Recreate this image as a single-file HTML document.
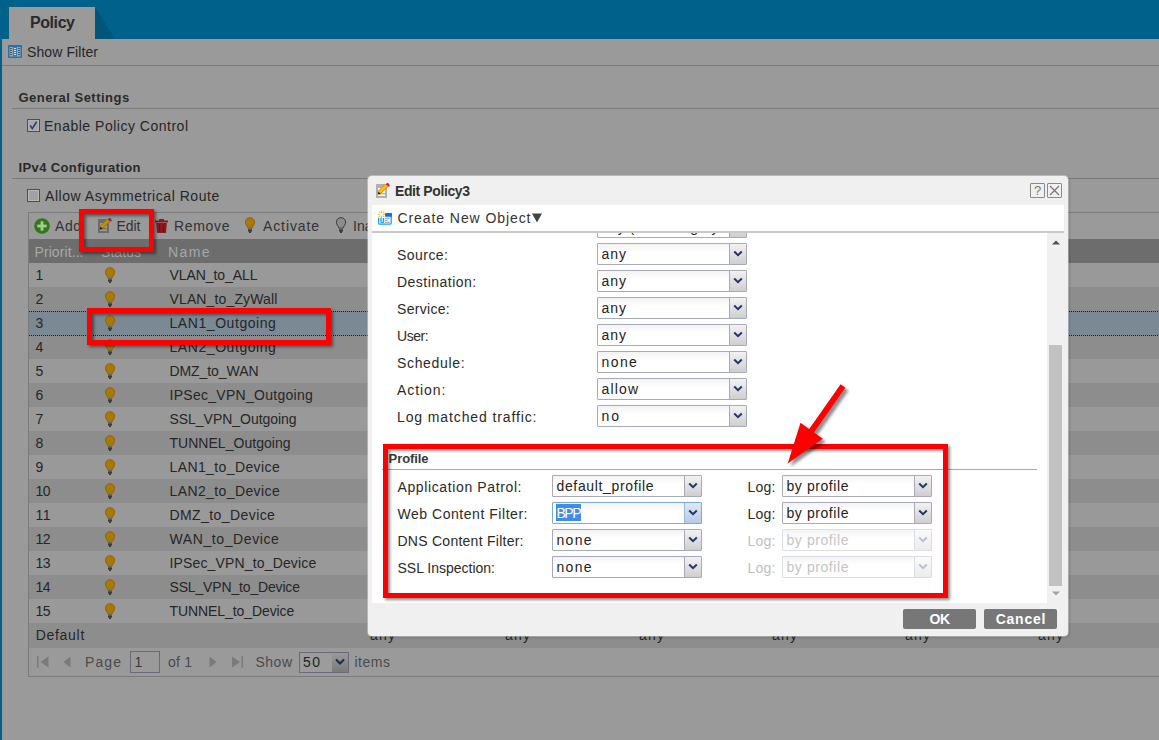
<!DOCTYPE html><html><head><meta charset="utf-8"><style>
html,body{margin:0;padding:0;width:1159px;height:740px;overflow:hidden;position:relative;font-family:"Liberation Sans",sans-serif;}
</style></head><body>
<div style="position:absolute;left:0px;top:0px;width:1159px;height:39px;background:#00628a"></div>
<div style="position:absolute;left:0px;top:39px;width:1159px;height:701px;background:#00628a"></div>
<div style="position:absolute;left:2px;top:39px;width:1157px;height:701px;background:#9a9a9a"></div>
<svg style="position:absolute;left:0;top:0" width="140" height="40"><polygon points="95,7 115,39 95,39" fill="#005579"/></svg>
<div style="position:absolute;left:9px;top:7px;width:86px;height:32px;background:#9a9a9a"></div>
<div style="position:absolute;left:30.00px;top:15.45px;font-size:16px;line-height:16px;font-weight:bold;color:#2a2a2a;letter-spacing:-0.427px;white-space:nowrap;">Policy</div>
<svg style="position:absolute;left:8px;top:45px" width="14" height="13" viewBox="0 0 14 13">
<rect x="0" y="0" width="14" height="13" rx="1" fill="#1f74b8"/>
<rect x="1.5" y="2" width="11" height="9.5" fill="#9fa7ad"/>
<rect x="5" y="2" width="4" height="9.5" fill="#2c7fc0"/>
<g fill="#555"><rect x="2" y="3" width="2" height="1"/><rect x="2" y="5" width="2" height="1"/><rect x="2" y="7" width="2" height="1"/><rect x="2" y="9" width="2" height="1"/>
<rect x="10" y="3" width="2" height="1"/><rect x="10" y="5" width="2" height="1"/><rect x="10" y="7" width="2" height="1"/><rect x="10" y="9" width="2" height="1"/></g>
<g fill="#cfe0ee"><rect x="6" y="3" width="2" height="1"/><rect x="6" y="5" width="2" height="1"/><rect x="6" y="7" width="2" height="1"/><rect x="6" y="9" width="2" height="1"/></g>
</svg>
<div style="position:absolute;left:27.00px;top:45.15px;font-size:14px;line-height:14px;color:#262626;letter-spacing:0.098px;white-space:nowrap;">Show Filter</div>
<div style="position:absolute;left:2px;top:65px;width:1157px;height:1px;background:#7b7b7b"></div>
<div style="position:absolute;left:18.50px;top:90.99px;font-size:13px;line-height:13px;font-weight:bold;color:#2a2a2a;letter-spacing:0.493px;white-space:nowrap;">General Settings</div>
<div style="position:absolute;left:12px;top:108px;width:1147px;height:1px;background:#7b7b7b"></div>
<svg style="position:absolute;left:27px;top:119px" width="13" height="13" viewBox="0 0 13 13">
<rect x="0.5" y="0.5" width="12" height="12" fill="#a9a9a9" stroke="#4e4e4e"/>
<rect x="1.5" y="1.5" width="10" height="10" fill="none" stroke="#b2b2b2"/>
<path d="M3.2 6.5 L5.3 9.6 L9.6 2.8" fill="none" stroke="#2b3f78" stroke-width="1.6"/>
</svg>
<div style="position:absolute;left:44.00px;top:119.15px;font-size:14px;line-height:14px;color:#262626;letter-spacing:0.508px;white-space:nowrap;">Enable Policy Control</div>
<div style="position:absolute;left:18.50px;top:160.99px;font-size:13px;line-height:13px;font-weight:bold;color:#2a2a2a;letter-spacing:0.379px;white-space:nowrap;">IPv4 Configuration</div>
<div style="position:absolute;left:12px;top:178px;width:1147px;height:1px;background:#7b7b7b"></div>
<svg style="position:absolute;left:27px;top:189px" width="13" height="13" viewBox="0 0 13 13">
<rect x="0.5" y="0.5" width="12" height="12" fill="#a2a2a2" stroke="#4e4e4e"/>
<rect x="1.5" y="1.5" width="10" height="10" fill="none" stroke="#b9b9b9"/>
</svg>
<div style="position:absolute;left:45.00px;top:189.15px;font-size:14px;line-height:14px;color:#262626;letter-spacing:0.539px;white-space:nowrap;">Allow Asymmetrical Route</div>
<div style="position:absolute;left:28px;top:212px;width:1172px;height:465px;border:1px solid #7b7b7b;box-sizing:border-box;background:#9a9a9a"></div>
<svg style="position:absolute;left:34px;top:218px" width="16" height="16" viewBox="0 0 16 16">
<circle cx="8" cy="8" r="7.8" fill="#2f7a16"/><rect x="6.6" y="3.3" width="2.8" height="9.4" fill="#a8c89c"/><rect x="3.3" y="6.6" width="9.4" height="2.8" fill="#a8c89c"/></svg>
<div style="position:absolute;left:55.00px;top:219.15px;font-size:14px;line-height:14px;color:#333;letter-spacing:0.545px;white-space:nowrap;">Add</div>
<svg style="position:absolute;left:98px;top:217px" width="15" height="17" viewBox="0 0 15 17"><rect x="0" y="2" width="11" height="14" fill="#6c6c6c"/><rect x="2" y="6" width="7" height="5" fill="#9a9a9a"/><rect x="2" y="12.3" width="7" height="1.7" fill="#9a9a9a"/>
<path d="M2.6 11.2 L10.6 3.2" stroke="#a86a08" stroke-width="4.2"/><path d="M2.9 10.9 L10.6 3.2" stroke="#c09010" stroke-width="2.6"/>
<path d="M1.8 12.6 L2.6 9.8 L4.6 11.8Z" fill="#111"/><circle cx="11.6" cy="2.2" r="1.3" fill="#8a2040"/><circle cx="12.6" cy="3.4" r="1.1" fill="#8a2040"/></svg>
<div style="position:absolute;left:116.50px;top:219.15px;font-size:14px;line-height:14px;color:#333;letter-spacing:-0.041px;white-space:nowrap;">Edit</div>
<svg style="position:absolute;left:155px;top:219px" width="13" height="14" viewBox="0 0 13 14">
<rect x="0" y="1.5" width="13" height="2" fill="#8a1a1f"/><rect x="4" y="0" width="5" height="2" fill="#8a1a1f"/>
<path d="M1.2 4 L11.8 4 L11 14 L2 14Z" fill="#8a1a1f"/><rect x="4" y="5" width="1" height="8" fill="#6b1015"/><rect x="8" y="5" width="1" height="8" fill="#6b1015"/></svg>
<div style="position:absolute;left:174.00px;top:219.15px;font-size:14px;line-height:14px;color:#333;letter-spacing:0.674px;white-space:nowrap;">Remove</div>
<svg style="position:absolute;left:245px;top:217px" width="11" height="17" viewBox="0 0 11 17">
<path d="M5 0.7 C7.9 0.7 9.6 2.7 9.6 5.2 C9.6 7.6 7.8 8.8 7 11.2 L3 11.2 C2.2 8.8 0.4 7.6 0.4 5.2 C0.4 2.7 2.1 0.7 5 0.7Z" fill="#a47b00" stroke="#a45c06" stroke-width="1"/>
<rect x="3" y="11.2" width="4" height="1.2" fill="#56687a"/><path d="M3 12.4 L7 12.4 L7 14.6 L3 14.6Z" fill="#3a3a3a"/><rect x="4" y="14.6" width="2" height="1.2" fill="#1e1e1e"/></svg>
<div style="position:absolute;left:263.00px;top:219.15px;font-size:14px;line-height:14px;color:#333;letter-spacing:0.886px;white-space:nowrap;">Activate</div>
<svg style="position:absolute;left:336px;top:217px" width="11" height="17" viewBox="0 0 11 17">
<path d="M5 0.7 C7.9 0.7 9.6 2.7 9.6 5.2 C9.6 7.6 7.8 8.8 7 11.2 L3 11.2 C2.2 8.8 0.4 7.6 0.4 5.2 C0.4 2.7 2.1 0.7 5 0.7Z" fill="#8c8c8c" stroke="#3a3a3a" stroke-width="1"/>
<rect x="3" y="11.2" width="4" height="1.2" fill="#56687a"/><path d="M3 12.4 L7 12.4 L7 14.6 L3 14.6Z" fill="#3a3a3a"/><rect x="4" y="14.6" width="2" height="1.2" fill="#1e1e1e"/></svg>
<div style="position:absolute;left:353.00px;top:219.15px;font-size:14px;line-height:14px;color:#333;letter-spacing:0.000px;white-space:nowrap;">Inactivate</div>
<div style="position:absolute;left:29px;top:239px;width:1130px;height:24px;background:#6d6d6d"></div>
<div style="position:absolute;left:34.50px;top:245.15px;font-size:14px;line-height:14px;color:#a8a8a8;letter-spacing:0.086px;white-space:nowrap;">Priorit...</div>
<div style="position:absolute;left:85px;top:251px;width:5px;height:1px;background:#a0a0a0"></div>
<div style="position:absolute;left:101.00px;top:245.15px;font-size:14px;line-height:14px;color:#a8a8a8;letter-spacing:0.062px;white-space:nowrap;">Status</div>
<div style="position:absolute;left:168.00px;top:245.15px;font-size:14px;line-height:14px;color:#a8a8a8;letter-spacing:1.385px;white-space:nowrap;">Name</div>
<div style="position:absolute;left:29px;top:263px;width:1130px;height:24px;background:#999999"></div>
<div style="position:absolute;left:35.50px;top:268.15px;font-size:14px;line-height:14px;color:#262626;letter-spacing:0.000px;white-space:nowrap;">1</div>
<svg style="position:absolute;left:105px;top:266.5px" width="11" height="17" viewBox="0 0 11 17">
<path d="M5 0.7 C7.9 0.7 9.6 2.7 9.6 5.2 C9.6 7.6 7.8 8.8 7 11.2 L3 11.2 C2.2 8.8 0.4 7.6 0.4 5.2 C0.4 2.7 2.1 0.7 5 0.7Z" fill="#a47b00" stroke="#a45c06" stroke-width="1"/>
<rect x="3" y="11.2" width="4" height="1.2" fill="#56687a"/><path d="M3 12.4 L7 12.4 L7 14.6 L3 14.6Z" fill="#3a3a3a"/><rect x="4" y="14.6" width="2" height="1.2" fill="#1e1e1e"/></svg>
<div style="position:absolute;left:169.50px;top:268.15px;font-size:14px;line-height:14px;color:#262626;letter-spacing:-0.073px;white-space:nowrap;">VLAN_to_ALL</div>
<div style="position:absolute;left:29px;top:287px;width:1130px;height:24px;background:#8d8d8d"></div>
<div style="position:absolute;left:35.50px;top:292.15px;font-size:14px;line-height:14px;color:#262626;letter-spacing:0.000px;white-space:nowrap;">2</div>
<svg style="position:absolute;left:105px;top:290.5px" width="11" height="17" viewBox="0 0 11 17">
<path d="M5 0.7 C7.9 0.7 9.6 2.7 9.6 5.2 C9.6 7.6 7.8 8.8 7 11.2 L3 11.2 C2.2 8.8 0.4 7.6 0.4 5.2 C0.4 2.7 2.1 0.7 5 0.7Z" fill="#a47b00" stroke="#a45c06" stroke-width="1"/>
<rect x="3" y="11.2" width="4" height="1.2" fill="#56687a"/><path d="M3 12.4 L7 12.4 L7 14.6 L3 14.6Z" fill="#3a3a3a"/><rect x="4" y="14.6" width="2" height="1.2" fill="#1e1e1e"/></svg>
<div style="position:absolute;left:169.50px;top:292.15px;font-size:14px;line-height:14px;color:#262626;letter-spacing:0.133px;white-space:nowrap;">VLAN_to_ZyWall</div>
<div style="position:absolute;left:29px;top:311px;width:1130px;height:24px;background:#7b8994"></div>
<div style="position:absolute;left:35.50px;top:316.15px;font-size:14px;line-height:14px;color:#262626;letter-spacing:0.000px;white-space:nowrap;">3</div>
<svg style="position:absolute;left:105px;top:314.5px" width="11" height="17" viewBox="0 0 11 17">
<path d="M5 0.7 C7.9 0.7 9.6 2.7 9.6 5.2 C9.6 7.6 7.8 8.8 7 11.2 L3 11.2 C2.2 8.8 0.4 7.6 0.4 5.2 C0.4 2.7 2.1 0.7 5 0.7Z" fill="#a47b00" stroke="#a45c06" stroke-width="1"/>
<rect x="3" y="11.2" width="4" height="1.2" fill="#56687a"/><path d="M3 12.4 L7 12.4 L7 14.6 L3 14.6Z" fill="#3a3a3a"/><rect x="4" y="14.6" width="2" height="1.2" fill="#1e1e1e"/></svg>
<div style="position:absolute;left:169.50px;top:316.15px;font-size:14px;line-height:14px;color:#262626;letter-spacing:0.564px;white-space:nowrap;">LAN1_Outgoing</div>
<div style="position:absolute;left:29px;top:335px;width:1130px;height:24px;background:#8d8d8d"></div>
<div style="position:absolute;left:35.50px;top:340.15px;font-size:14px;line-height:14px;color:#262626;letter-spacing:0.000px;white-space:nowrap;">4</div>
<svg style="position:absolute;left:105px;top:338.5px" width="11" height="17" viewBox="0 0 11 17">
<path d="M5 0.7 C7.9 0.7 9.6 2.7 9.6 5.2 C9.6 7.6 7.8 8.8 7 11.2 L3 11.2 C2.2 8.8 0.4 7.6 0.4 5.2 C0.4 2.7 2.1 0.7 5 0.7Z" fill="#a47b00" stroke="#a45c06" stroke-width="1"/>
<rect x="3" y="11.2" width="4" height="1.2" fill="#56687a"/><path d="M3 12.4 L7 12.4 L7 14.6 L3 14.6Z" fill="#3a3a3a"/><rect x="4" y="14.6" width="2" height="1.2" fill="#1e1e1e"/></svg>
<div style="position:absolute;left:169.50px;top:340.15px;font-size:14px;line-height:14px;color:#262626;letter-spacing:0.564px;white-space:nowrap;">LAN2_Outgoing</div>
<div style="position:absolute;left:29px;top:359px;width:1130px;height:24px;background:#999999"></div>
<div style="position:absolute;left:35.50px;top:364.15px;font-size:14px;line-height:14px;color:#262626;letter-spacing:0.000px;white-space:nowrap;">5</div>
<svg style="position:absolute;left:105px;top:362.5px" width="11" height="17" viewBox="0 0 11 17">
<path d="M5 0.7 C7.9 0.7 9.6 2.7 9.6 5.2 C9.6 7.6 7.8 8.8 7 11.2 L3 11.2 C2.2 8.8 0.4 7.6 0.4 5.2 C0.4 2.7 2.1 0.7 5 0.7Z" fill="#a47b00" stroke="#a45c06" stroke-width="1"/>
<rect x="3" y="11.2" width="4" height="1.2" fill="#56687a"/><path d="M3 12.4 L7 12.4 L7 14.6 L3 14.6Z" fill="#3a3a3a"/><rect x="4" y="14.6" width="2" height="1.2" fill="#1e1e1e"/></svg>
<div style="position:absolute;left:169.50px;top:364.15px;font-size:14px;line-height:14px;color:#262626;letter-spacing:-0.079px;white-space:nowrap;">DMZ_to_WAN</div>
<div style="position:absolute;left:29px;top:383px;width:1130px;height:24px;background:#8d8d8d"></div>
<div style="position:absolute;left:35.50px;top:388.15px;font-size:14px;line-height:14px;color:#262626;letter-spacing:0.000px;white-space:nowrap;">6</div>
<svg style="position:absolute;left:105px;top:386.5px" width="11" height="17" viewBox="0 0 11 17">
<path d="M5 0.7 C7.9 0.7 9.6 2.7 9.6 5.2 C9.6 7.6 7.8 8.8 7 11.2 L3 11.2 C2.2 8.8 0.4 7.6 0.4 5.2 C0.4 2.7 2.1 0.7 5 0.7Z" fill="#a47b00" stroke="#a45c06" stroke-width="1"/>
<rect x="3" y="11.2" width="4" height="1.2" fill="#56687a"/><path d="M3 12.4 L7 12.4 L7 14.6 L3 14.6Z" fill="#3a3a3a"/><rect x="4" y="14.6" width="2" height="1.2" fill="#1e1e1e"/></svg>
<div style="position:absolute;left:169.50px;top:388.15px;font-size:14px;line-height:14px;color:#262626;letter-spacing:0.281px;white-space:nowrap;">IPSec_VPN_Outgoing</div>
<div style="position:absolute;left:29px;top:407px;width:1130px;height:24px;background:#999999"></div>
<div style="position:absolute;left:35.50px;top:412.15px;font-size:14px;line-height:14px;color:#262626;letter-spacing:0.000px;white-space:nowrap;">7</div>
<svg style="position:absolute;left:105px;top:410.5px" width="11" height="17" viewBox="0 0 11 17">
<path d="M5 0.7 C7.9 0.7 9.6 2.7 9.6 5.2 C9.6 7.6 7.8 8.8 7 11.2 L3 11.2 C2.2 8.8 0.4 7.6 0.4 5.2 C0.4 2.7 2.1 0.7 5 0.7Z" fill="#a47b00" stroke="#a45c06" stroke-width="1"/>
<rect x="3" y="11.2" width="4" height="1.2" fill="#56687a"/><path d="M3 12.4 L7 12.4 L7 14.6 L3 14.6Z" fill="#3a3a3a"/><rect x="4" y="14.6" width="2" height="1.2" fill="#1e1e1e"/></svg>
<div style="position:absolute;left:169.50px;top:412.15px;font-size:14px;line-height:14px;color:#262626;letter-spacing:-0.036px;white-space:nowrap;">SSL_VPN_Outgoing</div>
<div style="position:absolute;left:29px;top:431px;width:1130px;height:24px;background:#8d8d8d"></div>
<div style="position:absolute;left:35.50px;top:436.15px;font-size:14px;line-height:14px;color:#262626;letter-spacing:0.000px;white-space:nowrap;">8</div>
<svg style="position:absolute;left:105px;top:434.5px" width="11" height="17" viewBox="0 0 11 17">
<path d="M5 0.7 C7.9 0.7 9.6 2.7 9.6 5.2 C9.6 7.6 7.8 8.8 7 11.2 L3 11.2 C2.2 8.8 0.4 7.6 0.4 5.2 C0.4 2.7 2.1 0.7 5 0.7Z" fill="#a47b00" stroke="#a45c06" stroke-width="1"/>
<rect x="3" y="11.2" width="4" height="1.2" fill="#56687a"/><path d="M3 12.4 L7 12.4 L7 14.6 L3 14.6Z" fill="#3a3a3a"/><rect x="4" y="14.6" width="2" height="1.2" fill="#1e1e1e"/></svg>
<div style="position:absolute;left:169.50px;top:436.15px;font-size:14px;line-height:14px;color:#262626;letter-spacing:0.028px;white-space:nowrap;">TUNNEL_Outgoing</div>
<div style="position:absolute;left:29px;top:455px;width:1130px;height:24px;background:#999999"></div>
<div style="position:absolute;left:35.50px;top:460.15px;font-size:14px;line-height:14px;color:#262626;letter-spacing:0.000px;white-space:nowrap;">9</div>
<svg style="position:absolute;left:105px;top:458.5px" width="11" height="17" viewBox="0 0 11 17">
<path d="M5 0.7 C7.9 0.7 9.6 2.7 9.6 5.2 C9.6 7.6 7.8 8.8 7 11.2 L3 11.2 C2.2 8.8 0.4 7.6 0.4 5.2 C0.4 2.7 2.1 0.7 5 0.7Z" fill="#a47b00" stroke="#a45c06" stroke-width="1"/>
<rect x="3" y="11.2" width="4" height="1.2" fill="#56687a"/><path d="M3 12.4 L7 12.4 L7 14.6 L3 14.6Z" fill="#3a3a3a"/><rect x="4" y="14.6" width="2" height="1.2" fill="#1e1e1e"/></svg>
<div style="position:absolute;left:169.50px;top:460.15px;font-size:14px;line-height:14px;color:#262626;letter-spacing:0.395px;white-space:nowrap;">LAN1_to_Device</div>
<div style="position:absolute;left:29px;top:479px;width:1130px;height:24px;background:#8d8d8d"></div>
<div style="position:absolute;left:35.50px;top:484.15px;font-size:14px;line-height:14px;color:#262626;letter-spacing:-0.572px;white-space:nowrap;">10</div>
<svg style="position:absolute;left:105px;top:482.5px" width="11" height="17" viewBox="0 0 11 17">
<path d="M5 0.7 C7.9 0.7 9.6 2.7 9.6 5.2 C9.6 7.6 7.8 8.8 7 11.2 L3 11.2 C2.2 8.8 0.4 7.6 0.4 5.2 C0.4 2.7 2.1 0.7 5 0.7Z" fill="#a47b00" stroke="#a45c06" stroke-width="1"/>
<rect x="3" y="11.2" width="4" height="1.2" fill="#56687a"/><path d="M3 12.4 L7 12.4 L7 14.6 L3 14.6Z" fill="#3a3a3a"/><rect x="4" y="14.6" width="2" height="1.2" fill="#1e1e1e"/></svg>
<div style="position:absolute;left:169.50px;top:484.15px;font-size:14px;line-height:14px;color:#262626;letter-spacing:0.395px;white-space:nowrap;">LAN2_to_Device</div>
<div style="position:absolute;left:29px;top:503px;width:1130px;height:24px;background:#999999"></div>
<div style="position:absolute;left:35.50px;top:508.15px;font-size:14px;line-height:14px;color:#262626;letter-spacing:0.467px;white-space:nowrap;">11</div>
<svg style="position:absolute;left:105px;top:506.5px" width="11" height="17" viewBox="0 0 11 17">
<path d="M5 0.7 C7.9 0.7 9.6 2.7 9.6 5.2 C9.6 7.6 7.8 8.8 7 11.2 L3 11.2 C2.2 8.8 0.4 7.6 0.4 5.2 C0.4 2.7 2.1 0.7 5 0.7Z" fill="#a47b00" stroke="#a45c06" stroke-width="1"/>
<rect x="3" y="11.2" width="4" height="1.2" fill="#56687a"/><path d="M3 12.4 L7 12.4 L7 14.6 L3 14.6Z" fill="#3a3a3a"/><rect x="4" y="14.6" width="2" height="1.2" fill="#1e1e1e"/></svg>
<div style="position:absolute;left:169.50px;top:508.15px;font-size:14px;line-height:14px;color:#262626;letter-spacing:0.420px;white-space:nowrap;">DMZ_to_Device</div>
<div style="position:absolute;left:29px;top:527px;width:1130px;height:24px;background:#8d8d8d"></div>
<div style="position:absolute;left:35.50px;top:532.15px;font-size:14px;line-height:14px;color:#262626;letter-spacing:-0.572px;white-space:nowrap;">12</div>
<svg style="position:absolute;left:105px;top:530.5px" width="11" height="17" viewBox="0 0 11 17">
<path d="M5 0.7 C7.9 0.7 9.6 2.7 9.6 5.2 C9.6 7.6 7.8 8.8 7 11.2 L3 11.2 C2.2 8.8 0.4 7.6 0.4 5.2 C0.4 2.7 2.1 0.7 5 0.7Z" fill="#a47b00" stroke="#a45c06" stroke-width="1"/>
<rect x="3" y="11.2" width="4" height="1.2" fill="#56687a"/><path d="M3 12.4 L7 12.4 L7 14.6 L3 14.6Z" fill="#3a3a3a"/><rect x="4" y="14.6" width="2" height="1.2" fill="#1e1e1e"/></svg>
<div style="position:absolute;left:169.50px;top:532.15px;font-size:14px;line-height:14px;color:#262626;letter-spacing:0.601px;white-space:nowrap;">WAN_to_Device</div>
<div style="position:absolute;left:29px;top:551px;width:1130px;height:24px;background:#999999"></div>
<div style="position:absolute;left:35.50px;top:556.15px;font-size:14px;line-height:14px;color:#262626;letter-spacing:-0.572px;white-space:nowrap;">13</div>
<svg style="position:absolute;left:105px;top:554.5px" width="11" height="17" viewBox="0 0 11 17">
<path d="M5 0.7 C7.9 0.7 9.6 2.7 9.6 5.2 C9.6 7.6 7.8 8.8 7 11.2 L3 11.2 C2.2 8.8 0.4 7.6 0.4 5.2 C0.4 2.7 2.1 0.7 5 0.7Z" fill="#a47b00" stroke="#a45c06" stroke-width="1"/>
<rect x="3" y="11.2" width="4" height="1.2" fill="#56687a"/><path d="M3 12.4 L7 12.4 L7 14.6 L3 14.6Z" fill="#3a3a3a"/><rect x="4" y="14.6" width="2" height="1.2" fill="#1e1e1e"/></svg>
<div style="position:absolute;left:169.50px;top:556.15px;font-size:14px;line-height:14px;color:#262626;letter-spacing:0.152px;white-space:nowrap;">IPSec_VPN_to_Device</div>
<div style="position:absolute;left:29px;top:575px;width:1130px;height:24px;background:#8d8d8d"></div>
<div style="position:absolute;left:35.50px;top:580.15px;font-size:14px;line-height:14px;color:#262626;letter-spacing:-0.572px;white-space:nowrap;">14</div>
<svg style="position:absolute;left:105px;top:578.5px" width="11" height="17" viewBox="0 0 11 17">
<path d="M5 0.7 C7.9 0.7 9.6 2.7 9.6 5.2 C9.6 7.6 7.8 8.8 7 11.2 L3 11.2 C2.2 8.8 0.4 7.6 0.4 5.2 C0.4 2.7 2.1 0.7 5 0.7Z" fill="#a47b00" stroke="#a45c06" stroke-width="1"/>
<rect x="3" y="11.2" width="4" height="1.2" fill="#56687a"/><path d="M3 12.4 L7 12.4 L7 14.6 L3 14.6Z" fill="#3a3a3a"/><rect x="4" y="14.6" width="2" height="1.2" fill="#1e1e1e"/></svg>
<div style="position:absolute;left:169.50px;top:580.15px;font-size:14px;line-height:14px;color:#262626;letter-spacing:-0.161px;white-space:nowrap;">SSL_VPN_to_Device</div>
<div style="position:absolute;left:29px;top:599px;width:1130px;height:24px;background:#999999"></div>
<div style="position:absolute;left:35.50px;top:604.15px;font-size:14px;line-height:14px;color:#262626;letter-spacing:-0.572px;white-space:nowrap;">15</div>
<svg style="position:absolute;left:105px;top:602.5px" width="11" height="17" viewBox="0 0 11 17">
<path d="M5 0.7 C7.9 0.7 9.6 2.7 9.6 5.2 C9.6 7.6 7.8 8.8 7 11.2 L3 11.2 C2.2 8.8 0.4 7.6 0.4 5.2 C0.4 2.7 2.1 0.7 5 0.7Z" fill="#a47b00" stroke="#a45c06" stroke-width="1"/>
<rect x="3" y="11.2" width="4" height="1.2" fill="#56687a"/><path d="M3 12.4 L7 12.4 L7 14.6 L3 14.6Z" fill="#3a3a3a"/><rect x="4" y="14.6" width="2" height="1.2" fill="#1e1e1e"/></svg>
<div style="position:absolute;left:169.50px;top:604.15px;font-size:14px;line-height:14px;color:#262626;letter-spacing:-0.083px;white-space:nowrap;">TUNNEL_to_Device</div>
<svg style="position:absolute;left:29px;top:311px" width="1130" height="25"><line x1="0" y1="0.5" x2="1130" y2="0.5" stroke="#1a1a1a" stroke-dasharray="1 1"/><line x1="0" y1="24.5" x2="1130" y2="24.5" stroke="#1a1a1a" stroke-dasharray="1 1"/></svg>
<div style="position:absolute;left:29px;top:623px;width:1130px;height:25px;background:#8d8d8d"></div>
<div style="position:absolute;left:35.70px;top:628.15px;font-size:14px;line-height:14px;color:#262626;letter-spacing:0.707px;white-space:nowrap;">Default</div>
<div style="position:absolute;left:370.00px;top:628.15px;font-size:14px;line-height:14px;color:#262626;letter-spacing:1.214px;white-space:nowrap;">any</div>
<div style="position:absolute;left:505.00px;top:628.15px;font-size:14px;line-height:14px;color:#262626;letter-spacing:1.214px;white-space:nowrap;">any</div>
<div style="position:absolute;left:639.00px;top:628.15px;font-size:14px;line-height:14px;color:#262626;letter-spacing:1.214px;white-space:nowrap;">any</div>
<div style="position:absolute;left:772.00px;top:628.15px;font-size:14px;line-height:14px;color:#262626;letter-spacing:1.214px;white-space:nowrap;">any</div>
<div style="position:absolute;left:905.00px;top:628.15px;font-size:14px;line-height:14px;color:#262626;letter-spacing:1.214px;white-space:nowrap;">any</div>
<div style="position:absolute;left:1038.00px;top:628.15px;font-size:14px;line-height:14px;color:#262626;letter-spacing:1.214px;white-space:nowrap;">any</div>
<div style="position:absolute;left:29px;top:676px;width:1130px;height:1px;background:#7b7b7b"></div>
<svg style="position:absolute;left:37px;top:655px" width="210" height="14" viewBox="0 0 210 14">
<rect x="0" y="1" width="1.5" height="12" fill="#7a7a7a"/><path d="M11.5 1.5 L3.5 7 L11.5 12.5Z" fill="#7a7a7a"/>
<path d="M33.5 1.5 L26.5 7 L33.5 12.5Z" fill="#7a7a7a"/>
<path d="M172.5 1.5 L179.5 7 L172.5 12.5Z" fill="#7a7a7a"/>
<path d="M195 1.5 L203 7 L195 12.5Z" fill="#7a7a7a"/><rect x="204.5" y="1" width="1.5" height="12" fill="#7a7a7a"/>
</svg>
<div style="position:absolute;left:85.00px;top:655.15px;font-size:14px;line-height:14px;color:#4a4a4a;letter-spacing:1.101px;white-space:nowrap;">Page</div>
<div style="position:absolute;left:130px;top:651px;width:30px;height:22px;border:1px solid #6a6a7c;box-sizing:border-box;background:#9a9a9a"></div>
<div style="position:absolute;left:134.50px;top:655.15px;font-size:14px;line-height:14px;color:#3a3a3a;letter-spacing:0.000px;white-space:nowrap;">1</div>
<div style="position:absolute;left:168.00px;top:655.15px;font-size:14px;line-height:14px;color:#4a4a4a;letter-spacing:0.216px;white-space:nowrap;">of 1</div>
<div style="position:absolute;left:255.50px;top:655.15px;font-size:14px;line-height:14px;color:#4a4a4a;letter-spacing:0.493px;white-space:nowrap;">Show</div>
<div style="position:absolute;left:299px;top:652px;width:50px;height:21px;border:1px solid #6a6a7c;box-sizing:border-box;background:#9c9c9c"></div>
<div style="position:absolute;left:332px;top:653px;width:16px;height:19px;background:linear-gradient(#999,#7a7a7a)"></div>
<svg style="position:absolute;left:335px;top:658px" width="10" height="8" viewBox="0 0 10 8"><path d="M1 1.5 L5 5.5 L9 1.5" fill="none" stroke="#1c2a4a" stroke-width="2"/></svg>
<div style="position:absolute;left:303.00px;top:655.15px;font-size:14px;line-height:14px;color:#222;letter-spacing:1.428px;white-space:nowrap;">50</div>
<div style="position:absolute;left:354.50px;top:655.15px;font-size:14px;line-height:14px;color:#4a4a4a;letter-spacing:0.513px;white-space:nowrap;">items</div>
<div style="position:absolute;left:79px;top:209px;width:75px;height:43px;border:5px solid #ff0000;box-sizing:border-box;filter:drop-shadow(2px 2px 1.5px rgba(0,0,0,0.45))"></div>
<div style="position:absolute;left:87px;top:308px;width:244px;height:37px;border:5px solid #ff0000;box-sizing:border-box;filter:drop-shadow(2px 2px 1.5px rgba(0,0,0,0.45))"></div>
<div style="position:absolute;left:368px;top:176px;width:700px;height:460px;background:#f0f0f0;border-radius:4px;box-shadow:0 0 0 1px rgba(255,255,255,0.35), 1px 1px 3px rgba(0,0,0,0.25)"></div>
<svg style="position:absolute;left:376px;top:182px" width="15" height="17" viewBox="0 0 15 17"><rect x="0" y="2" width="11" height="14" fill="#b0b0b0"/><rect x="2" y="6" width="7" height="5" fill="#fafafa"/><rect x="2" y="12.3" width="7" height="1.7" fill="#fafafa"/>
<path d="M2.6 11.2 L10.6 3.2" stroke="#f08c00" stroke-width="4.2"/><path d="M2.9 10.9 L10.6 3.2" stroke="#ffc000" stroke-width="2.6"/>
<path d="M1.8 12.6 L2.6 9.8 L4.6 11.8Z" fill="#111"/><circle cx="11.6" cy="2.2" r="1.3" fill="#d0104a"/><circle cx="12.6" cy="3.4" r="1.1" fill="#d0104a"/></svg>
<div style="position:absolute;left:395.00px;top:184.15px;font-size:14px;line-height:14px;font-weight:bold;color:#333;letter-spacing:-0.396px;white-space:nowrap;">Edit Policy3</div>
<div style="position:absolute;left:1030px;top:183px;width:15px;height:15px;border:1px solid #8a8a8a;box-sizing:border-box;border-radius:1px"></div>
<div style="position:absolute;left:1034.00px;top:183.99px;font-size:13px;line-height:13px;color:#777;letter-spacing:0.000px;white-space:nowrap;">?</div>
<div style="position:absolute;left:1047px;top:183px;width:15px;height:15px;border:1px solid #8a8a8a;box-sizing:border-box;border-radius:1px"></div>
<svg style="position:absolute;left:1047px;top:183px" width="15" height="15" viewBox="0 0 15 15"><path d="M3 3 L12 12 M12 3 L3 12" stroke="#777" stroke-width="1.2"/></svg>
<div style="position:absolute;left:372px;top:205px;width:692px;height:26px;background:#fff"></div>
<div style="position:absolute;left:372px;top:231px;width:692px;height:2px;background:#c9c9c9"></div>
<svg style="position:absolute;left:374px;top:207px" width="22" height="22" viewBox="0 0 22 22">
<path d="M4.6 10.8 V16 Q4.6 17.2 5.8 17.2 H16 Q17.2 17.2 17.2 16 V9" fill="none" stroke="#12a6fa" stroke-width="1.3"/>
<rect x="11" y="6" width="7" height="3.8" rx="0.5" fill="#0a6ef2"/>
<rect x="11" y="10.8" width="4.8" height="0.9" fill="#8a8a8a"/><rect x="11" y="12.8" width="2.8" height="0.9" fill="#8a8a8a"/><rect x="11" y="14.8" width="4.8" height="0.9" fill="#8a8a8a"/>
<path d="M6.9 11 V14.4 Q6.9 15.8 8.3 15.8 Q9.6 15.8 9.6 14.4 V11" fill="#bfe3fb" stroke="#12a0f8" stroke-width="1.2"/>
<g stroke="#f8c200" stroke-width="1.1" stroke-linecap="round">
<path d="M7.5 4 V5.2 M7.5 9.2 V10.4 M4.2 7.2 H5.4 M9.6 7.2 H10.8 M5.2 4.9 L5.9 5.6 M9.1 8.8 L9.8 9.5 M9.8 4.9 L9.1 5.6 M5.9 8.8 L5.2 9.5"/></g>
</svg>
<div style="position:absolute;left:397.50px;top:211.15px;font-size:14px;line-height:14px;color:#333;letter-spacing:0.921px;white-space:nowrap;">Create New Object</div>
<svg style="position:absolute;left:531px;top:213px" width="12" height="10" viewBox="0 0 12 10"><path d="M1 0.5 L11 0.5 L6 9.5Z" fill="#444"/></svg>
<div style="position:absolute;left:372px;top:233px;width:675px;height:370px;background:#fff;overflow:hidden">
<div style="position:absolute;left:225px;top:-17px;width:150px;height:22px;border:1px solid #a9a9bd;box-sizing:border-box;background:linear-gradient(#f3f3f3,#fff 40%);border-radius:1px"></div><div style="position:absolute;left:357px;top:-16px;width:17px;height:20px;background:linear-gradient(#f2f2f2,#cfcfcf);border-left:1px solid #a9a9bd;box-sizing:border-box"></div><svg style="position:absolute;left:361px;top:-10px" width="10" height="8" viewBox="0 0 10 8"><path d="M1.2 1.5 L5 5.2 L8.8 1.5" fill="none" stroke="#22366e" stroke-width="2"/></svg>
<div style="position:absolute;left:225px;top:10px;width:150px;height:22px;border:1px solid #a9a9bd;box-sizing:border-box;background:linear-gradient(#f3f3f3,#fff 40%);border-radius:1px"></div><div style="position:absolute;left:357px;top:11px;width:17px;height:20px;background:linear-gradient(#f2f2f2,#cfcfcf);border-left:1px solid #a9a9bd;box-sizing:border-box"></div><svg style="position:absolute;left:361px;top:17px" width="10" height="8" viewBox="0 0 10 8"><path d="M1.2 1.5 L5 5.2 L8.8 1.5" fill="none" stroke="#22366e" stroke-width="2"/></svg>
<div style="position:absolute;left:225px;top:37px;width:150px;height:22px;border:1px solid #a9a9bd;box-sizing:border-box;background:linear-gradient(#f3f3f3,#fff 40%);border-radius:1px"></div><div style="position:absolute;left:357px;top:38px;width:17px;height:20px;background:linear-gradient(#f2f2f2,#cfcfcf);border-left:1px solid #a9a9bd;box-sizing:border-box"></div><svg style="position:absolute;left:361px;top:44px" width="10" height="8" viewBox="0 0 10 8"><path d="M1.2 1.5 L5 5.2 L8.8 1.5" fill="none" stroke="#22366e" stroke-width="2"/></svg>
<div style="position:absolute;left:225px;top:64px;width:150px;height:22px;border:1px solid #a9a9bd;box-sizing:border-box;background:linear-gradient(#f3f3f3,#fff 40%);border-radius:1px"></div><div style="position:absolute;left:357px;top:65px;width:17px;height:20px;background:linear-gradient(#f2f2f2,#cfcfcf);border-left:1px solid #a9a9bd;box-sizing:border-box"></div><svg style="position:absolute;left:361px;top:71px" width="10" height="8" viewBox="0 0 10 8"><path d="M1.2 1.5 L5 5.2 L8.8 1.5" fill="none" stroke="#22366e" stroke-width="2"/></svg>
<div style="position:absolute;left:225px;top:91px;width:150px;height:22px;border:1px solid #a9a9bd;box-sizing:border-box;background:linear-gradient(#f3f3f3,#fff 40%);border-radius:1px"></div><div style="position:absolute;left:357px;top:92px;width:17px;height:20px;background:linear-gradient(#f2f2f2,#cfcfcf);border-left:1px solid #a9a9bd;box-sizing:border-box"></div><svg style="position:absolute;left:361px;top:98px" width="10" height="8" viewBox="0 0 10 8"><path d="M1.2 1.5 L5 5.2 L8.8 1.5" fill="none" stroke="#22366e" stroke-width="2"/></svg>
<div style="position:absolute;left:225px;top:118px;width:150px;height:22px;border:1px solid #a9a9bd;box-sizing:border-box;background:linear-gradient(#f3f3f3,#fff 40%);border-radius:1px"></div><div style="position:absolute;left:357px;top:119px;width:17px;height:20px;background:linear-gradient(#f2f2f2,#cfcfcf);border-left:1px solid #a9a9bd;box-sizing:border-box"></div><svg style="position:absolute;left:361px;top:125px" width="10" height="8" viewBox="0 0 10 8"><path d="M1.2 1.5 L5 5.2 L8.8 1.5" fill="none" stroke="#22366e" stroke-width="2"/></svg>
<div style="position:absolute;left:225px;top:145px;width:150px;height:22px;border:1px solid #a9a9bd;box-sizing:border-box;background:linear-gradient(#f3f3f3,#fff 40%);border-radius:1px"></div><div style="position:absolute;left:357px;top:146px;width:17px;height:20px;background:linear-gradient(#f2f2f2,#cfcfcf);border-left:1px solid #a9a9bd;box-sizing:border-box"></div><svg style="position:absolute;left:361px;top:152px" width="10" height="8" viewBox="0 0 10 8"><path d="M1.2 1.5 L5 5.2 L8.8 1.5" fill="none" stroke="#22366e" stroke-width="2"/></svg>
<div style="position:absolute;left:225px;top:172px;width:150px;height:22px;border:1px solid #a9a9bd;box-sizing:border-box;background:linear-gradient(#f3f3f3,#fff 40%);border-radius:1px"></div><div style="position:absolute;left:357px;top:173px;width:17px;height:20px;background:linear-gradient(#f2f2f2,#cfcfcf);border-left:1px solid #a9a9bd;box-sizing:border-box"></div><svg style="position:absolute;left:361px;top:179px" width="10" height="8" viewBox="0 0 10 8"><path d="M1.2 1.5 L5 5.2 L8.8 1.5" fill="none" stroke="#22366e" stroke-width="2"/></svg>
<div style="position:absolute;left:10px;top:236px;width:655px;height:1px;background:#a8a8a8"></div>
<div style="position:absolute;left:180px;top:242px;width:150px;height:22px;border:1px solid #a9a9bd;box-sizing:border-box;background:linear-gradient(#f3f3f3,#fff 40%);border-radius:1px"></div><div style="position:absolute;left:312px;top:243px;width:17px;height:20px;background:linear-gradient(#f2f2f2,#cfcfcf);border-left:1px solid #a9a9bd;box-sizing:border-box"></div><svg style="position:absolute;left:316px;top:249px" width="10" height="8" viewBox="0 0 10 8"><path d="M1.2 1.5 L5 5.2 L8.8 1.5" fill="none" stroke="#22366e" stroke-width="2"/></svg>
<div style="position:absolute;left:410px;top:242px;width:150px;height:22px;border:1px solid #a9a9bd;box-sizing:border-box;background:linear-gradient(#f3f3f3,#fff 40%);border-radius:1px"></div><div style="position:absolute;left:542px;top:243px;width:17px;height:20px;background:linear-gradient(#f2f2f2,#cfcfcf);border-left:1px solid #a9a9bd;box-sizing:border-box"></div><svg style="position:absolute;left:546px;top:249px" width="10" height="8" viewBox="0 0 10 8"><path d="M1.2 1.5 L5 5.2 L8.8 1.5" fill="none" stroke="#22366e" stroke-width="2"/></svg>
<div style="position:absolute;left:180px;top:269px;width:150px;height:22px;border:1px solid #7ea8dc;box-sizing:border-box;background:linear-gradient(#f3f3f3,#fff 40%);border-radius:1px"></div><div style="position:absolute;left:312px;top:270px;width:17px;height:20px;background:linear-gradient(#dfe9f5,#b6cbe4);border-left:1px solid #9ab7da;box-sizing:border-box"></div><svg style="position:absolute;left:316px;top:276px" width="10" height="8" viewBox="0 0 10 8"><path d="M1.2 1.5 L5 5.2 L8.8 1.5" fill="none" stroke="#22366e" stroke-width="2"/></svg>
<div style="position:absolute;left:410px;top:269px;width:150px;height:22px;border:1px solid #a9a9bd;box-sizing:border-box;background:linear-gradient(#f3f3f3,#fff 40%);border-radius:1px"></div><div style="position:absolute;left:542px;top:270px;width:17px;height:20px;background:linear-gradient(#f2f2f2,#cfcfcf);border-left:1px solid #a9a9bd;box-sizing:border-box"></div><svg style="position:absolute;left:546px;top:276px" width="10" height="8" viewBox="0 0 10 8"><path d="M1.2 1.5 L5 5.2 L8.8 1.5" fill="none" stroke="#22366e" stroke-width="2"/></svg>
<div style="position:absolute;left:184px;top:271px;width:25px;height:17px;background:#3d8ee6"></div>
<div style="position:absolute;left:180px;top:296px;width:150px;height:22px;border:1px solid #a9a9bd;box-sizing:border-box;background:linear-gradient(#f3f3f3,#fff 40%);border-radius:1px"></div><div style="position:absolute;left:312px;top:297px;width:17px;height:20px;background:linear-gradient(#f2f2f2,#cfcfcf);border-left:1px solid #a9a9bd;box-sizing:border-box"></div><svg style="position:absolute;left:316px;top:303px" width="10" height="8" viewBox="0 0 10 8"><path d="M1.2 1.5 L5 5.2 L8.8 1.5" fill="none" stroke="#22366e" stroke-width="2"/></svg>
<div style="position:absolute;left:410px;top:296px;width:150px;height:22px;border:1px solid #dcdce4;box-sizing:border-box;background:linear-gradient(#f3f3f3,#fff 40%);border-radius:1px"></div><div style="position:absolute;left:542px;top:297px;width:17px;height:20px;background:linear-gradient(#fafafa,#ececec);border-left:1px solid #dcdce4;box-sizing:border-box"></div><svg style="position:absolute;left:546px;top:303px" width="10" height="8" viewBox="0 0 10 8"><path d="M1.2 1.5 L5 5.2 L8.8 1.5" fill="none" stroke="#b8c0d8" stroke-width="2"/></svg>
<div style="position:absolute;left:180px;top:323px;width:150px;height:22px;border:1px solid #a9a9bd;box-sizing:border-box;background:linear-gradient(#f3f3f3,#fff 40%);border-radius:1px"></div><div style="position:absolute;left:312px;top:324px;width:17px;height:20px;background:linear-gradient(#f2f2f2,#cfcfcf);border-left:1px solid #a9a9bd;box-sizing:border-box"></div><svg style="position:absolute;left:316px;top:330px" width="10" height="8" viewBox="0 0 10 8"><path d="M1.2 1.5 L5 5.2 L8.8 1.5" fill="none" stroke="#22366e" stroke-width="2"/></svg>
<div style="position:absolute;left:410px;top:323px;width:150px;height:22px;border:1px solid #dcdce4;box-sizing:border-box;background:linear-gradient(#f3f3f3,#fff 40%);border-radius:1px"></div><div style="position:absolute;left:542px;top:324px;width:17px;height:20px;background:linear-gradient(#fafafa,#ececec);border-left:1px solid #dcdce4;box-sizing:border-box"></div><svg style="position:absolute;left:546px;top:330px" width="10" height="8" viewBox="0 0 10 8"><path d="M1.2 1.5 L5 5.2 L8.8 1.5" fill="none" stroke="#b8c0d8" stroke-width="2"/></svg>
<div style="position:absolute;left:229.50px;top:-12.85px;font-size:14px;line-height:14px;color:#222;letter-spacing:0.358px;white-space:nowrap;">any (Excluding Zy</div>
<div style="position:absolute;left:25.00px;top:15.15px;font-size:14px;line-height:14px;color:#2a2a2a;letter-spacing:0.459px;white-space:nowrap;">Source:</div>
<div style="position:absolute;left:229.50px;top:14.15px;font-size:14px;line-height:14px;color:#222;letter-spacing:0.964px;white-space:nowrap;">any</div>
<div style="position:absolute;left:25.00px;top:42.15px;font-size:14px;line-height:14px;color:#2a2a2a;letter-spacing:0.479px;white-space:nowrap;">Destination:</div>
<div style="position:absolute;left:229.50px;top:41.15px;font-size:14px;line-height:14px;color:#222;letter-spacing:0.964px;white-space:nowrap;">any</div>
<div style="position:absolute;left:25.00px;top:69.15px;font-size:14px;line-height:14px;color:#2a2a2a;letter-spacing:0.304px;white-space:nowrap;">Service:</div>
<div style="position:absolute;left:229.50px;top:68.15px;font-size:14px;line-height:14px;color:#222;letter-spacing:0.964px;white-space:nowrap;">any</div>
<div style="position:absolute;left:25.00px;top:96.15px;font-size:14px;line-height:14px;color:#2a2a2a;letter-spacing:-0.437px;white-space:nowrap;">User:</div>
<div style="position:absolute;left:229.50px;top:95.15px;font-size:14px;line-height:14px;color:#222;letter-spacing:0.964px;white-space:nowrap;">any</div>
<div style="position:absolute;left:25.00px;top:123.15px;font-size:14px;line-height:14px;color:#2a2a2a;letter-spacing:0.666px;white-space:nowrap;">Schedule:</div>
<div style="position:absolute;left:229.50px;top:122.15px;font-size:14px;line-height:14px;color:#222;letter-spacing:1.418px;white-space:nowrap;">none</div>
<div style="position:absolute;left:25.00px;top:150.15px;font-size:14px;line-height:14px;color:#2a2a2a;letter-spacing:0.917px;white-space:nowrap;">Action:</div>
<div style="position:absolute;left:229.50px;top:149.15px;font-size:14px;line-height:14px;color:#222;letter-spacing:1.149px;white-space:nowrap;">allow</div>
<div style="position:absolute;left:25.00px;top:177.15px;font-size:14px;line-height:14px;color:#2a2a2a;letter-spacing:0.884px;white-space:nowrap;">Log matched traffic:</div>
<div style="position:absolute;left:229.50px;top:176.15px;font-size:14px;line-height:14px;color:#222;letter-spacing:1.928px;white-space:nowrap;">no</div>
<div style="position:absolute;left:16.60px;top:218.99px;font-size:13px;line-height:13px;font-weight:bold;color:#3a3a3a;letter-spacing:-0.076px;white-space:nowrap;">Profile</div>
<div style="position:absolute;left:25.50px;top:247.15px;font-size:14px;line-height:14px;color:#2a2a2a;letter-spacing:0.620px;white-space:nowrap;">Application Patrol:</div>
<div style="position:absolute;left:184.50px;top:246.15px;font-size:14px;line-height:14px;color:#222;letter-spacing:0.646px;white-space:nowrap;">default_profile</div>
<div style="position:absolute;left:375.50px;top:247.15px;font-size:14px;line-height:14px;color:#2a2a2a;letter-spacing:0.251px;white-space:nowrap;">Log:</div>
<div style="position:absolute;left:414.50px;top:246.15px;font-size:14px;line-height:14px;color:#222;letter-spacing:0.577px;white-space:nowrap;">by profile</div>
<div style="position:absolute;left:25.50px;top:274.15px;font-size:14px;line-height:14px;color:#2a2a2a;letter-spacing:0.536px;white-space:nowrap;">Web Content Filter:</div>
<div style="position:absolute;left:184.50px;top:273.15px;font-size:14px;line-height:14px;color:#fff;letter-spacing:-1.507px;white-space:nowrap;">BPP</div>
<div style="position:absolute;left:375.50px;top:274.15px;font-size:14px;line-height:14px;color:#2a2a2a;letter-spacing:0.251px;white-space:nowrap;">Log:</div>
<div style="position:absolute;left:414.50px;top:273.15px;font-size:14px;line-height:14px;color:#222;letter-spacing:0.577px;white-space:nowrap;">by profile</div>
<div style="position:absolute;left:25.50px;top:301.15px;font-size:14px;line-height:14px;color:#2a2a2a;letter-spacing:0.257px;white-space:nowrap;">DNS Content Filter:</div>
<div style="position:absolute;left:184.50px;top:300.15px;font-size:14px;line-height:14px;color:#222;letter-spacing:1.285px;white-space:nowrap;">none</div>
<div style="position:absolute;left:375.50px;top:301.15px;font-size:14px;line-height:14px;color:#c0c0c0;letter-spacing:0.251px;white-space:nowrap;">Log:</div>
<div style="position:absolute;left:414.50px;top:300.15px;font-size:14px;line-height:14px;color:#c4c4c4;letter-spacing:0.577px;white-space:nowrap;">by profile</div>
<div style="position:absolute;left:25.50px;top:328.15px;font-size:14px;line-height:14px;color:#2a2a2a;letter-spacing:-0.004px;white-space:nowrap;">SSL Inspection:</div>
<div style="position:absolute;left:184.50px;top:327.15px;font-size:14px;line-height:14px;color:#222;letter-spacing:1.285px;white-space:nowrap;">none</div>
<div style="position:absolute;left:375.50px;top:328.15px;font-size:14px;line-height:14px;color:#c0c0c0;letter-spacing:0.251px;white-space:nowrap;">Log:</div>
<div style="position:absolute;left:414.50px;top:327.15px;font-size:14px;line-height:14px;color:#c4c4c4;letter-spacing:0.577px;white-space:nowrap;">by profile</div>
</div>
<div style="position:absolute;left:1047px;top:233px;width:17px;height:370px;background:#f0f0f0"></div>
<div style="position:absolute;left:1049px;top:345px;width:13px;height:241px;background:#c1c1c1"></div>
<svg style="position:absolute;left:1050px;top:238px" width="12" height="8" viewBox="0 0 12 8"><path d="M2 6.5 L10 6.5 L6 2.5Z" fill="#505050"/></svg>
<svg style="position:absolute;left:1050px;top:590px" width="12" height="8" viewBox="0 0 12 8"><path d="M2 1.5 L10 1.5 L6 5.5Z" fill="#a3a3a3"/></svg>
<div style="position:absolute;left:383px;top:444px;width:565px;height:154px;border:5px solid #ff0000;box-sizing:border-box;filter:drop-shadow(2px 2px 1.5px rgba(0,0,0,0.45))"></div>
<svg style="position:absolute;left:0;top:0;overflow:visible" width="1159" height="740">
<defs><filter id="f" x="-20%" y="-20%" width="140%" height="140%"><feGaussianBlur stdDeviation="1.6"/></filter></defs>
<polygon points="840.6,384.3 845.4,387.7 814.0,432.5 822.8,438.8 787.7,463.6 800.5,422.8 809.2,429.1" fill="rgba(0,0,0,0.45)" transform="translate(3,3)" filter="url(#f)"/>
<polygon points="840.6,384.3 845.4,387.7 814.0,432.5 822.8,438.8 787.7,463.6 800.5,422.8 809.2,429.1" fill="#ff0000"/>
</svg>
<div style="position:absolute;left:903px;top:609px;width:73px;height:20px;background:#777;border-radius:2px"></div>
<div style="position:absolute;left:984px;top:609px;width:73px;height:20px;background:#777;border-radius:2px"></div>
<div style="position:absolute;left:929.50px;top:612.15px;font-size:14px;line-height:14px;font-weight:bold;color:#fff;letter-spacing:-0.500px;white-space:nowrap;">OK</div>
<div style="position:absolute;left:995.70px;top:612.15px;font-size:14px;line-height:14px;font-weight:bold;color:#fff;letter-spacing:0.758px;white-space:nowrap;">Cancel</div>
</body></html>
